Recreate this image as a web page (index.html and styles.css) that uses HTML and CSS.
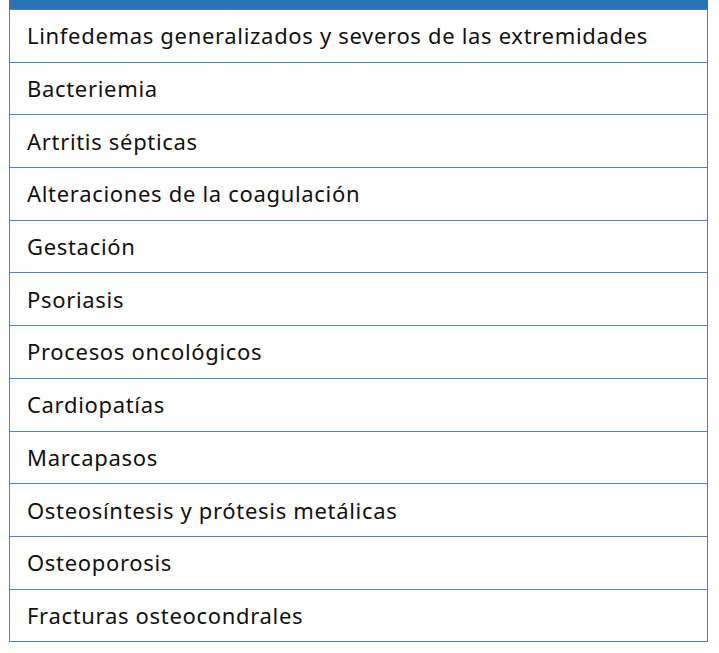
FILE: index.html
```html
<!DOCTYPE html>
<html lang="es">
<head>
<meta charset="utf-8">
<link rel="stylesheet" href="styles.css">
</head>
<body>
<div class="wrap">
  <div class="topbar"></div>
  <table class="list">
    <tr><td>Linfedemas generalizados y severos de las extremidades</td></tr>
    <tr><td>Bacteriemia</td></tr>
    <tr><td>Artritis sépticas</td></tr>
    <tr><td>Alteraciones de la coagulación</td></tr>
    <tr><td>Gestación</td></tr>
    <tr><td>Psoriasis</td></tr>
    <tr><td>Procesos oncológicos</td></tr>
    <tr><td>Cardiopatías</td></tr>
    <tr><td>Marcapasos</td></tr>
    <tr><td>Osteosíntesis y prótesis metálicas</td></tr>
    <tr><td>Osteoporosis</td></tr>
    <tr><td>Fracturas osteocondrales</td></tr>
  </table>
</div>
</body>
</html>
```
FILE: styles.css
```css
html, body {
  margin: 0;
  padding: 0;
  background: #ffffff;
}
.wrap {
  width: 699px;
  margin-left: 9px;
}
.topbar {
  height: 9px;
  background: #2b73b8;
}
.list {
  width: 100%;
  border-collapse: collapse;
  font-family: "Noto Sans", "Open Sans", sans-serif;
  font-size: 22px;
  letter-spacing: 0.68px;
  color: #111111;
}
.list td {
  border: 1px solid #4a86c5;
  height: 52.7px;
  padding: 0 0 1px 17px;
  box-sizing: border-box;
  vertical-align: middle;
}
```
